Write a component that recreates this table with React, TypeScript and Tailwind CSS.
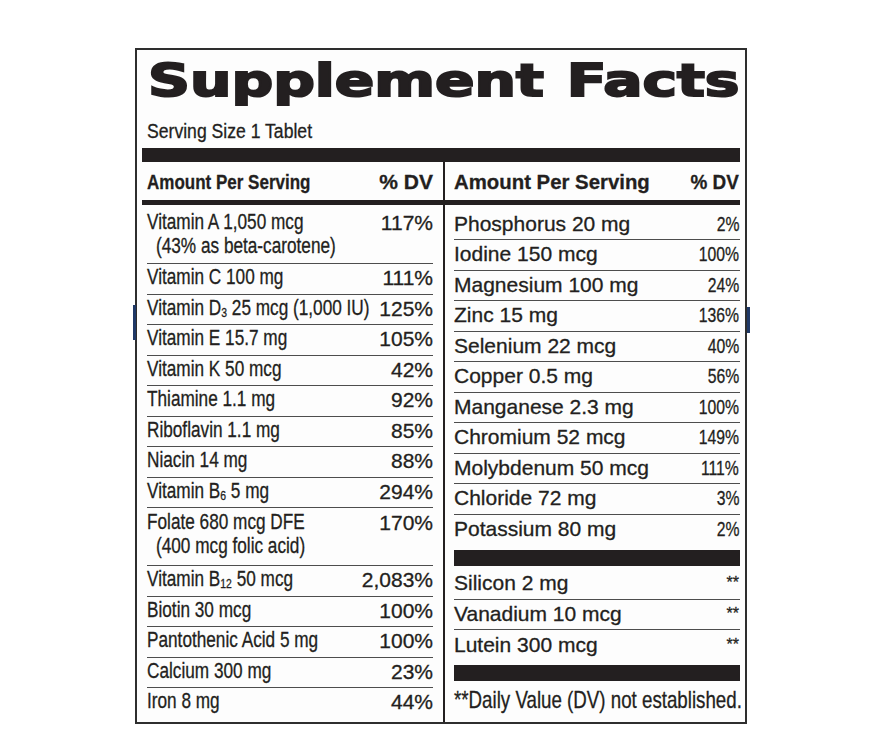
import type { ReactNode } from 'react'

type Row = { label: ReactNode; sub?: string; dv: string; h: string; line?: boolean }

const leftRows: Row[] = [
  { label: 'Vitamin A 1,050 mcg', sub: '(43% as beta-carotene)', dv: '117%', h: 'h-[59px] pt-[6px]', line: true },
  { label: 'Vitamin C 100 mg', dv: '111%', h: 'h-[30.5px] pt-[2px]', line: true },
  {
    label: (
      <>
        Vitamin D<span className="text-[13px] align-[-2px]">3</span> 25 mcg (1,000 IU)
      </>
    ),
    dv: '125%',
    h: 'h-[30.5px] pt-[2px]',
    line: true,
  },
  { label: 'Vitamin E 15.7 mg', dv: '105%', h: 'h-[30.5px] pt-[2px]', line: true },
  { label: 'Vitamin K 50 mcg', dv: '42%', h: 'h-[30.5px] pt-[2px]', line: true },
  { label: 'Thiamine 1.1 mg', dv: '92%', h: 'h-[30.5px] pt-[2px]', line: true },
  { label: 'Riboflavin 1.1 mg', dv: '85%', h: 'h-[30.5px] pt-[2px]', line: true },
  { label: 'Niacin 14 mg', dv: '88%', h: 'h-[30.5px] pt-[2px]', line: true },
  {
    label: (
      <>
        Vitamin B<span className="text-[13px] align-[-2px]">6</span> 5 mg
      </>
    ),
    dv: '294%',
    h: 'h-[30.5px] pt-[2px]',
    line: true,
  },
  { label: 'Folate 680 mcg DFE', sub: '(400 mcg folic acid)', dv: '170%', h: 'h-[58px] pt-[3px]', line: true },
  {
    label: (
      <>
        Vitamin B<span className="text-[13px] align-[-2px]">12</span> 50 mcg
      </>
    ),
    dv: '2,083%',
    h: 'h-[30.5px] pt-[2px]',
    line: true,
  },
  { label: 'Biotin 30 mcg', dv: '100%', h: 'h-[30.5px] pt-[2px]', line: true },
  { label: 'Pantothenic Acid 5 mg', dv: '100%', h: 'h-[30.5px] pt-[2px]', line: true },
  { label: 'Calcium 300 mg', dv: '23%', h: 'h-[30.5px] pt-[2px]', line: true },
  { label: 'Iron 8 mg', dv: '44%', h: 'flex-1 pt-[2px]' },
]

const minerals: Row[] = [
  { label: 'Phosphorus 20 mg', dv: '2%', h: 'h-[35px] pt-[7px]', line: true },
  { label: 'Iodine 150 mcg', dv: '100%', h: 'h-[30.5px] pt-[2px]', line: true },
  { label: 'Magnesium 100 mg', dv: '24%', h: 'h-[30.5px] pt-[2px]', line: true },
  { label: 'Zinc 15 mg', dv: '136%', h: 'h-[30.5px] pt-[2px]', line: true },
  { label: 'Selenium 22 mcg', dv: '40%', h: 'h-[30.5px] pt-[2px]', line: true },
  { label: 'Copper 0.5 mg', dv: '56%', h: 'h-[30.5px] pt-[2px]', line: true },
  { label: 'Manganese 2.3 mg', dv: '100%', h: 'h-[30.5px] pt-[2px]', line: true },
  { label: 'Chromium 52 mcg', dv: '149%', h: 'h-[30.5px] pt-[2px]', line: true },
  { label: 'Molybdenum 50 mcg', dv: '111%', h: 'h-[30.5px] pt-[2px]', line: true },
  { label: 'Chloride 72 mg', dv: '3%', h: 'h-[30.5px] pt-[2px]', line: true },
  { label: 'Potassium 80 mg', dv: '2%', h: 'h-[35px] pt-[2px]' },
]

const others: Row[] = [
  { label: 'Silicon 2 mg', dv: '**', h: 'h-[34px] pt-[5px]', line: true },
  { label: 'Vanadium 10 mcg', dv: '**', h: 'h-[30px] pt-[2px]', line: true },
  { label: 'Lutein 300 mcg', dv: '**', h: 'h-[35px] pt-[3px]' },
]

function LeftRow({ row }: { row: Row }) {
  return (
    <div
      className={`${row.h} flex justify-between leading-[23px] ${
        row.line ? 'border-b border-[#4d4d4d]' : ''
      }`}
    >
      <div className="min-w-0 flex-1 text-[21.5px]">
        <span className="inline-block origin-left scale-x-[0.8] whitespace-nowrap">{row.label}</span>
        {row.sub && (
          <div className="pt-[1px] pl-[9px]">
            <span className="inline-block origin-left scale-x-[0.8] whitespace-nowrap">{row.sub}</span>
          </div>
        )}
      </div>
      <span className="shrink-0 text-[21px]">{row.dv}</span>
    </div>
  )
}

function RightRow({ row }: { row: Row }) {
  const stars = row.dv === '**'
  return (
    <div
      className={`${row.h} flex justify-between text-[21px] leading-[24px] ${
        row.line ? 'border-b border-[#4d4d4d]' : ''
      }`}
    >
      <span className="whitespace-nowrap">{row.label}</span>
      {stars ? (
        <span className="shrink-0 pr-[1px] text-[16px]">**</span>
      ) : (
        <span className="inline-block shrink-0 origin-right scale-x-[0.75] pr-[1px]">{row.dv}</span>
      )}
    </div>
  )
}

export default function App() {
  return (
    <div className="min-h-screen bg-white pt-[48px] pl-[135px] font-['Liberation_Sans',Arial,sans-serif] text-[#231f20] [-webkit-text-stroke:0.3px_#231f20]">
      <div className="relative flex h-[676px] w-[612px] flex-col border-2 border-[#2e2e2e] bg-[#fdfdfd] px-[5px]">
        {/* bits of the blue bottle showing behind the label */}
        <div className="absolute -left-[4px] top-[255px] h-[35px] w-[3px] bg-[#1f3866]" />
        <div className="absolute -right-[5px] top-[257px] h-[26px] w-[3px] bg-[#1f3866]" />

        <div className="pt-[9px] pl-[6px]">
          <h1 className="inline-block origin-left scale-x-[1.324] whitespace-nowrap font-['DejaVu_Sans',sans-serif] text-[44px] leading-none font-bold [word-spacing:2px] [-webkit-text-stroke:2px_#231f20]">
            Supplement Facts
          </h1>
        </div>
        <div className="mt-[18px] pl-[5px] text-[20px] leading-[21px]">
          <span className="inline-block origin-left scale-x-[0.88] whitespace-nowrap">Serving Size 1 Tablet</span>
        </div>
        <div className="mt-[6px] h-[14px] bg-[#231f20]" />

        <div className="flex flex-1">
          <div className="flex w-[301px] shrink-0 flex-col">
            <div className="flex h-[38px] justify-between pt-[8px] pr-[10px] pl-[5px] text-[21px] leading-[24px] font-bold">
              <span className="inline-block origin-left scale-x-[0.81] whitespace-nowrap">Amount Per Serving</span>
              <span>% DV</span>
            </div>
            <div className="h-[5px] bg-[#231f20]" />
            <div className="flex flex-1 flex-col pr-[10px] pl-[5px]">
              {leftRows.map((r, i) => (
                <LeftRow key={i} row={r} />
              ))}
            </div>
          </div>

          <div className="flex w-[297px] min-w-0 shrink-0 flex-col border-l-2 border-[#231f20]">
            <div className="flex h-[38px] justify-between pt-[8px] pl-[9px] text-[21px] leading-[24px] font-bold">
              <span className="inline-block origin-left scale-x-[0.97] whitespace-nowrap">Amount Per Serving</span>
              <span className="inline-block origin-right scale-x-[0.9] pr-[1px]">% DV</span>
            </div>
            <div className="h-[5px] bg-[#231f20]" />
            <div className="flex min-w-0 flex-1 flex-col pl-[9px]">
              {minerals.map((r, i) => (
                <RightRow key={i} row={r} />
              ))}
              <div className="h-[16px] shrink-0 bg-[#231f20]" />
              {others.map((r, i) => (
                <RightRow key={i} row={r} />
              ))}
              <div className="h-[16px] shrink-0 bg-[#231f20]" />
              <div className="min-w-0 flex-1 pt-[6px] text-[24px] leading-[26px]">
                <span className="inline-block origin-left scale-x-[0.78] whitespace-nowrap">
                  **Daily Value (DV) not established.
                </span>
              </div>
            </div>
          </div>
        </div>
      </div>
    </div>
  )
}
